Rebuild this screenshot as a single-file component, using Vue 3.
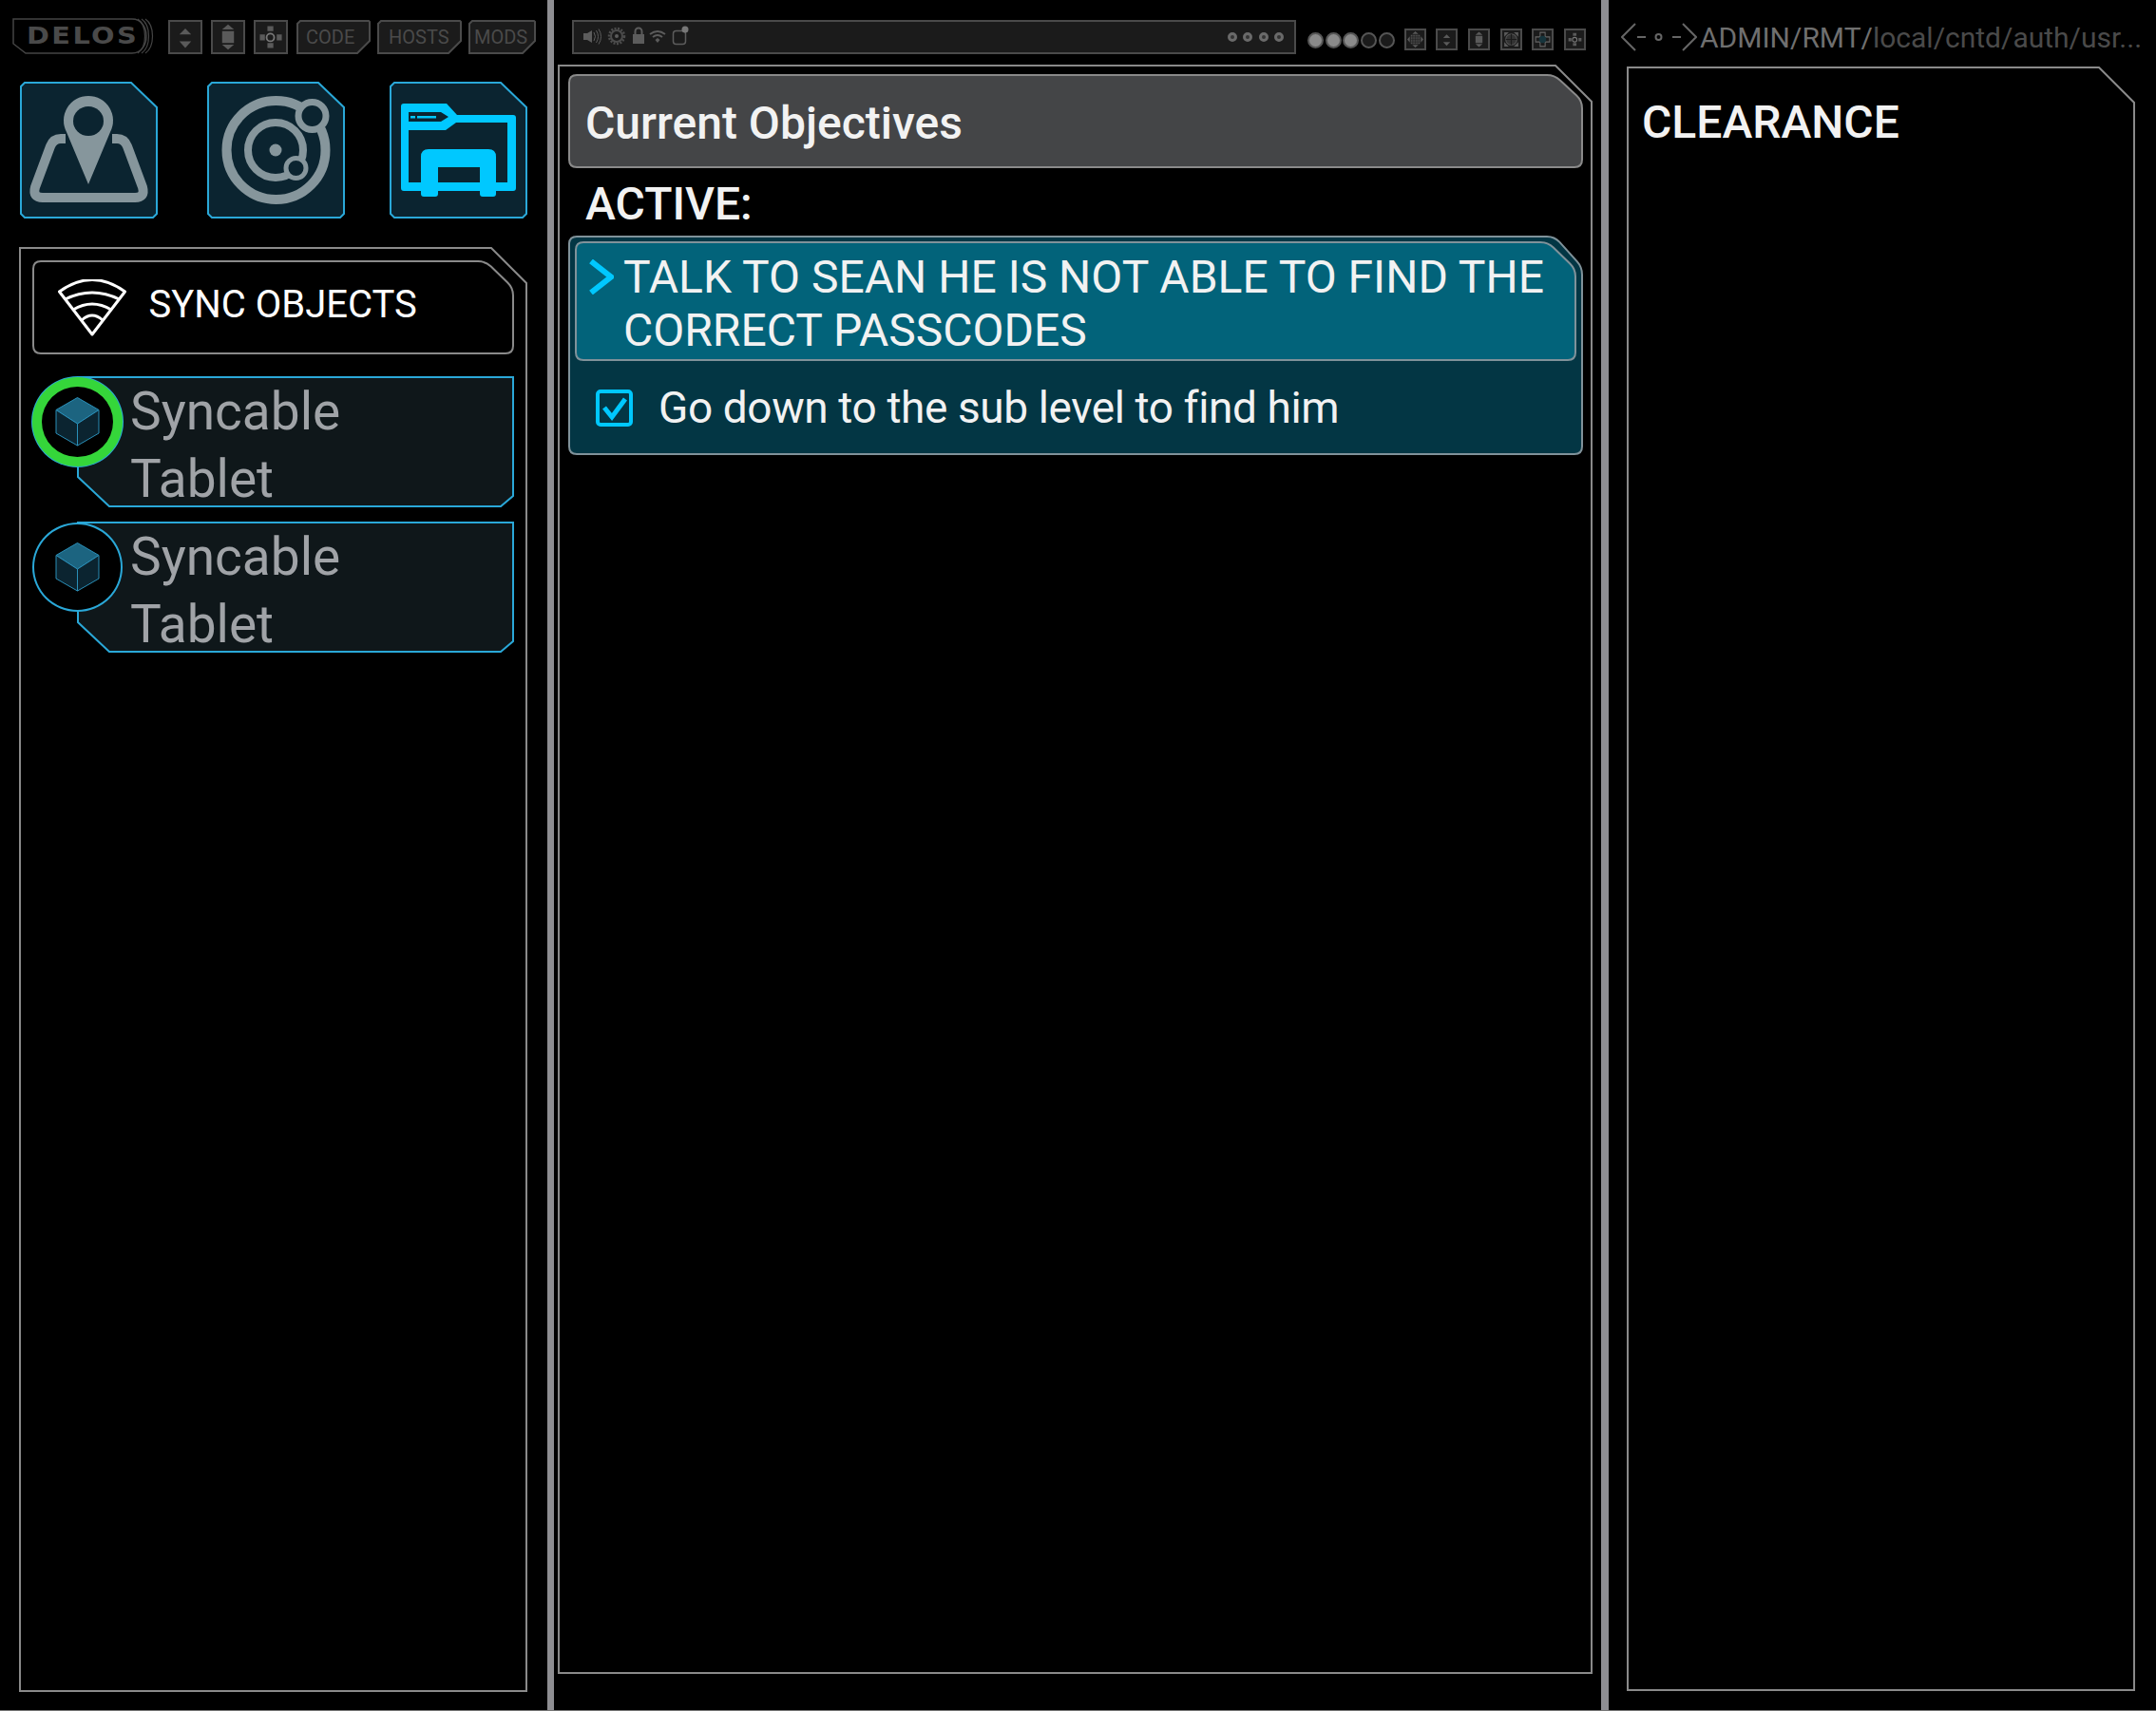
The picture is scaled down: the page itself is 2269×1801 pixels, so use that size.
<script setup>
// Arma el contorno con esquinas cortadas (en px de la caja)
function shape(w, h, { tl = [0, 0], tr = [0, 0], br = [0, 0], bl = [0, 0], r = 0 } = {}) {
  const i = 1
  const pts = [
    [i + tl[0], i], [w - i - tr[0], i], [w - i, i + tr[1]],
    [w - i, h - i - br[1]], [w - i - br[0], h - i], [i + bl[0], h - i],
    [i, h - i - bl[1]], [i, i + tl[1]]
  ].filter((p, k, a) => {
    const n = a[(k + 1) % a.length]
    return p[0] !== n[0] || p[1] !== n[1]
  })
  if (!r) return 'M' + pts.map((p) => p.join(' ')).join('L') + 'Z'
  let d = ''
  pts.forEach((p, k) => {
    const a = pts[(k + pts.length - 1) % pts.length]
    const b = pts[(k + 1) % pts.length]
    const toward = (q) => {
      const len = Math.hypot(q[0] - p[0], q[1] - p[1])
      const t = Math.min(r, len / 2) / len
      return [p[0] + (q[0] - p[0]) * t, p[1] + (q[1] - p[1]) * t]
    }
    const s = toward(a)
    const e = toward(b)
    d += `${k ? 'L' : 'M'}${s[0]} ${s[1]}Q${p[0]} ${p[1]} ${e[0]} ${e[1]}`
  })
  return d + 'Z'
}

const navCut = { tr: [27, 26], tl: [4, 4], bl: [4, 4], br: [4, 4] }
const tabs = [
  { label: 'CODE', w: 78, pad: 10 },
  { label: 'HOSTS', w: 89, pad: 12 },
  { label: 'MODS', w: 71, pad: 6 }
]
const rows = [{ id: 1, synced: true }, { id: 2, synced: false }]
const dots = [true, true, true, false, false]
const rightIcons = ['i-grid', 'i-ud', 'i-body', 'i-ball', 'i-node', 'i-cross']
</script>

<template>
  <div class="page">
    <!-- simbolos de la barra -->
    <svg class="defs" width="0" height="0">
      <symbol id="i-ud" viewBox="0 0 36 36">
        <path d="M18 8l7 7H11zM11 23h14l-7 8z" />
      </symbol>
      <symbol id="i-body" viewBox="0 0 36 36">
        <path d="M18 3l7 6H11zM11 11h14v14H11zM11 27h14l-7 6z" />
      </symbol>
      <symbol id="i-cross" viewBox="0 0 36 36">
        <path d="M14 5h7v6h-7zM14 25h7v6h-7zM5 15h6v7H5zM25 15h6v7h-6z" />
        <circle cx="17.5" cy="18.5" r="4.5" fill="none" stroke="#777" stroke-width="2" />
      </symbol>
      <symbol id="i-grid" viewBox="0 0 36 36">
        <path d="M18 2l6 5H12zM12 29h12l-6 5zM2 18l5-6v12zM34 18l-5-6v12z" />
        <path d="M9 9h18v18H9z" />
        <path d="M12 9v18M15 9v18M18 9v18M21 9v18M24 9v18M9 12h18M9 15h18M9 18h18M9 21h18M9 24h18" stroke="#1b1b1b" stroke-width="1" />
      </symbol>
      <symbol id="i-ball" viewBox="0 0 36 36">
        <path d="M4 4h9L4 13zM32 4h-9l9 9zM4 32h9l-9-9zM32 32h-9l9-9z" />
        <circle cx="18" cy="18" r="11" fill="#333" stroke="#555" stroke-width="2" />
        <path d="M18 7v22M7 18h22" stroke="#1b1b1b" stroke-width="2" />
      </symbol>
      <symbol id="i-node" viewBox="0 0 36 36">
        <path d="M13 4h10v9h9v10h-9v9H13v-9H4V13h9z" fill="none" stroke="#666" stroke-width="2" />
        <circle cx="18" cy="18" r="7" fill="#16343c" />
      </symbol>
    </svg>

    <!-- columna izquierda -->
    <section class="col col-left">
      <div class="topbar">
        <div class="delos">
          <svg class="fill" width="146" height="38">
            <path d="M1 1H126C146 1 146 37 126 37H14L1 27Z" fill="none" stroke="#444" stroke-width="1.5" />
            <path d="M132 1C142 8 142 30 132 37M136 1C146 8 146 30 136 37M140 1C150 8 150 30 140 37" fill="none" stroke="#444" stroke-width="1.2" />
          </svg>
          <span>DELOS</span>
        </div>
        <svg v-for="id in ['i-ud', 'i-body', 'i-cross']" :key="id" class="sq" width="36" height="36"><use :href="'#' + id" /></svg>
        <div v-for="t in tabs" :key="t.label" class="tab" :style="{ width: t.w + 'px', paddingLeft: t.pad + 'px' }">
          <svg class="fill" :width="t.w" height="36">
            <path :d="shape(t.w, 36, { tl: [3, 3], br: [13, 13], tr: [1, 1] })" fill="#1b1b1b" stroke="#4a4a4a" stroke-width="2" />
          </svg>
          <span>{{ t.label }}</span>
        </div>
      </div>

      <div class="nav">
        <button class="nav-btn">
          <svg width="145" height="144">
            <path :d="shape(145, 144, navCut)" fill="#0b2430" stroke="#2aa8d8" stroke-width="2" />
            <path d="M48 60h-5q-8 0-11 8L16 111q-3 11 8 11H121q11 0 8-11L113 68q-3-8-11-8h-5" fill="none" stroke="#86969c" stroke-width="10" />
            <path d="M72 108L49 53A26 26 0 1 1 95 53Z" fill="#86969c" />
            <ellipse cx="72" cy="41.5" rx="16" ry="15.5" fill="#0b2430" />
          </svg>
        </button>
        <button class="nav-btn">
          <svg width="145" height="144">
            <path :d="shape(145, 144, navCut)" fill="#0b2430" stroke="#2aa8d8" stroke-width="2" />
            <g fill="#0b2430" stroke="#86969c">
              <circle cx="72.5" cy="72" r="52" stroke-width="10" />
              <circle cx="72" cy="72" r="29" stroke-width="8" />
              <circle cx="110.5" cy="36" r="14.5" stroke-width="7" />
              <circle cx="93.5" cy="91" r="10.5" stroke-width="5" />
            </g>
            <circle cx="72" cy="72" r="6.5" fill="#86969c" />
          </svg>
        </button>
        <button class="nav-btn">
          <svg width="145" height="144">
            <path :d="shape(145, 144, navCut)" fill="#0b2430" stroke="#2aa8d8" stroke-width="2" />
            <path fill="#00c8ff" fill-rule="evenodd" d="M15 23H60L71 35H130q3 0 3 3V112q0 3-3 3H112v3q0 3-3 3H98q-3 0-3-3v-3H51v3q0 3-3 3H36q-3 0-3-3v-3H15q-3 0-3-3V26q0-3 3-3ZM20 32V42H54L62 37 54 32ZM20 51V106H33V79q0-8 8-8H104q8 0 8 8V106H124V43H70L59 51ZM51 90V106H95V90Z" />
            <path d="M22 36h5v2.500h-5zM29 36h20v2.500H29z" fill="#00c8ff" />
          </svg>
        </button>
      </div>

      <div class="panel panel-left">
        <svg class="fill" width="535" height="1521">
          <path :d="shape(535, 1521, { tr: [37, 37] })" fill="none" stroke="#8a8a8a" stroke-width="2" />
        </svg>
        <div class="sync">
          <svg class="fill" width="507" height="99">
            <path :d="shape(507, 99, { tr: [29, 28], r: 8 })" fill="none" stroke="#8a8a8a" stroke-width="2" />
          </svg>
          <svg class="wifi" width="72" height="60" viewBox="0 0 72 60">
            <path d="M1.500 13Q36-12 70.500 13L36 58Z" fill="none" stroke="#fff" stroke-width="3" stroke-linejoin="round" />
            <path d="M7.500 21Q36 7 64.500 21M16 32Q36 20 56 32M25 43Q36 33 47 43" fill="none" stroke="#fff" stroke-width="3" />
          </svg>
          <span>SYNC OBJECTS</span>
        </div>
        <div v-for="row in rows" :key="row.id" class="row">
          <svg class="row-bg" width="460" height="138">
            <path :d="shape(460, 138, { bl: [33, 31], br: [13, 11] })" fill="#0f171a" stroke="#2aa8d8" stroke-width="2" />
          </svg>
          <div class="disc" :class="{ synced: row.synced }">
            <svg width="47" height="52" viewBox="0 0 47 52">
              <path d="M23.500.500L46 13.500 23.500 28 1 13.500Z" fill="#1c6480" stroke="#2a8fb8" />
              <path d="M1 13.500L23.500 28V51L1 38ZM46 13.500L23.500 28V51L46 38Z" fill="#0b2430" stroke="#2a8fb8" />
            </svg>
          </div>
          <div class="row-label">Syncable Tablet</div>
        </div>
      </div>
    </section>

    <div class="divider"></div>

    <!-- columna central -->
    <section class="col col-mid">
      <div class="topbar-mid">
        <div class="status">
          <svg width="125" height="34" viewBox="0 0 125 34" fill="#5c5c5c">
            <path d="M8 13h4l5-3v13l-5-3H8z" />
            <path d="M19 12q3 4.500 0 9M21.500 10q4 6.500 0 13M24 8.500q5 8 0 16" fill="none" stroke="#5c5c5c" />
            <circle cx="43" cy="16" r="6" fill="none" stroke="#4c4c4c" stroke-width="2" />
            <circle cx="43" cy="16" r="8" fill="none" stroke="#4c4c4c" stroke-width="2.500" stroke-dasharray="2 1.500" />
            <circle cx="43" cy="16" r="2" />
            <path d="M60 14h12v10H60z" />
            <path d="M62.500 14v-3a3.500 3.500 0 0 1 7 0v3" fill="none" stroke="#5c5c5c" stroke-width="2" />
            <path d="M78 14q8-6 16 0M81 17q5-4 10 0" fill="none" stroke="#5c5c5c" stroke-width="2" />
            <path d="M83.500 20l2.500-2 2.500 2-2.500 3z" />
            <rect x="102.500" y="10.500" width="13" height="14" rx="3" fill="none" stroke="#5c5c5c" stroke-width="1.500" />
            <circle cx="115" cy="9" r="3.500" fill="#777" />
          </svg>
          <div class="leds"><i v-for="n in 4" :key="n"></i></div>
        </div>
        <div class="dots"><i v-for="(on, k) in dots" :key="k" :class="{ on }"></i></div>
        <div class="mini">
          <svg v-for="id in rightIcons" :key="id" class="sq sq-small" width="23" height="23"><use :href="'#' + id" /></svg>
        </div>
      </div>

      <div class="panel panel-mid">
        <svg class="fill" width="1089" height="1694">
          <path :d="shape(1089, 1694, { tr: [38, 38] })" fill="none" stroke="#8a8a8a" stroke-width="2" />
        </svg>
        <div class="head">
          <svg class="fill" width="1068" height="99">
            <path :d="shape(1068, 99, { tr: [29, 27], r: 8 })" fill="#444547" stroke="#8a8a8a" stroke-width="2" />
          </svg>
          <span>Current Objectives</span>
        </div>
        <div class="active-title">ACTIVE:</div>
        <div class="objective">
          <svg class="fill" width="1068" height="231">
            <path :d="shape(1068, 231, { tr: [29, 32], r: 8 })" fill="#033644" stroke="#80929a" stroke-width="2" />
          </svg>
          <div class="obj-main">
            <svg class="fill" width="1054" height="126">
              <path :d="shape(1054, 126, { tr: [29, 28], r: 8 })" fill="#02637a" stroke="#80929a" stroke-width="2" />
            </svg>
            <svg class="chevron" width="27" height="37" viewBox="0 0 27 37">
              <path d="M3 2L24 18.500 3 35" fill="none" stroke="#00c8ff" stroke-width="6" />
            </svg>
            <div class="obj-text">TALK TO SEAN HE IS NOT ABLE TO FIND THE CORRECT PASSCODES</div>
          </div>
          <div class="obj-sub">
            <svg width="39" height="39" viewBox="0 0 39 39">
              <rect x="2" y="2" width="35" height="35" rx="3" fill="none" stroke="#00c8ff" stroke-width="4" />
              <path d="M9 19L17 29 31 10" fill="none" stroke="#00c8ff" stroke-width="5" />
            </svg>
            <span>Go down to the sub level to find him</span>
          </div>
        </div>
      </div>
    </section>

    <div class="divider divider-2"></div>

    <!-- columna derecha -->
    <section class="col col-right">
      <div class="url">
        <svg width="80" height="30" viewBox="0 0 80 30">
          <path d="M15 1L1 15 15 29M17 15h9M54 15h9M65 1L79 15 65 29" fill="none" stroke="#666" stroke-width="2" />
          <circle cx="39.500" cy="15" r="3" fill="none" stroke="#666" stroke-width="2" />
        </svg>
        <span class="url-text"><b>ADMIN/RMT/</b>local/cntd/auth/usr...</span>
      </div>
      <div class="panel panel-right">
        <svg class="fill" width="535" height="1710">
          <path :d="shape(535, 1710, { tr: [37, 37] })" fill="none" stroke="#8a8a8a" stroke-width="2" />
        </svg>
        <div class="clearance">CLEARANCE</div>
      </div>
    </section>
  </div>
</template>

<style>
html, body {
  background: #000;
}
</style>

<style scoped>
.page {
  width: 2269px;
  height: 1801px;
  box-sizing: border-box;
  display: flex;
  background: #000;
  border-bottom: 1px solid #777;
  font-family: Roboto, "Liberation Sans", sans-serif;
  overflow: hidden;
}

.defs {
  position: absolute;
}

.fill {
  position: absolute;
  left: 0;
  top: 0;
  overflow: visible;
}

.col {
  flex: none;
}

.col-left {
  width: 576px;
}

.col-mid {
  width: 1102px;
}

.col-right {
  flex: 1;
}

.divider {
  flex: none;
  width: 7px;
  background: #8e8e92;
}

.divider-2 {
  width: 8px;
}

.panel {
  position: relative;
}

/* barra superior izquierda */
.topbar {
  display: flex;
  align-items: flex-end;
  height: 38px;
  margin-top: 19px;
  padding-left: 13px;
}

.delos {
  position: relative;
  width: 146px;
  height: 38px;
  margin-right: 18px;
  color: #4a4a4a;
  font-family: "DejaVu Sans", sans-serif;
  font-weight: 700;
  font-size: 24px;
  letter-spacing: 2px;
  line-height: 38px;
}

.delos span {
  position: relative;
  display: block;
  margin-left: 15px;
  transform: scaleX(1.2);
  transform-origin: left center;
}

.sq {
  flex: none;
  box-sizing: border-box;
  background: #1b1b1b;
  border: 2px solid #4a4a4a;
  fill: #5a5a5a;
  margin-right: 9px;
}

.tab {
  position: relative;
  box-sizing: border-box;
  flex: none;
  height: 36px;
  margin-right: 7px;
  color: #4a4a4a;
  font-size: 20px;
  line-height: 36px;
}

.tab span {
  position: relative;
}

/* botones grandes */
.nav {
  display: flex;
  margin-top: 29px;
  padding-left: 21px;
}

.nav-btn {
  flex: none;
  width: 145px;
  height: 144px;
  padding: 0;
  border: 0;
  background: none;
}

.nav-btn + .nav-btn {
  margin-left: 52px;
}

.nav-btn:last-child {
  margin-left: 47px;
}

.panel-left {
  width: 535px;
  height: 1521px;
  margin: 30px 0 0 20px;
  padding: 14px;
  box-sizing: border-box;
}

.sync {
  position: relative;
  display: flex;
  align-items: center;
  height: 99px;
  padding-left: 27px;
  color: #fff;
  font-size: 40px;
}

.wifi {
  position: relative;
  margin-right: 23.500px;
}

.sync span {
  position: relative;
  top: -3px;
}

.row {
  position: relative;
  display: flex;
  width: 507px;
  height: 138px;
  margin-top: 23px;
}

.row + .row {
  margin-top: 15px;
}

.row-bg {
  position: absolute;
  left: 47px;
  top: 0;
}

.disc {
  position: relative;
  flex: none;
  display: flex;
  align-items: center;
  justify-content: center;
  box-sizing: border-box;
  width: 95px;
  height: 94px;
  margin-top: 1px;
  border-radius: 50%;
  background: #000;
  border: 2px solid #2aa8d8;
}

.disc.synced {
  border: 10px solid #35d63a;
  box-shadow: inset 0 0 0 1px #000, 0 0 0 1px #2aa8d8;
}

.row-label {
  position: relative;
  width: 300px;
  margin: 2px 0 0 8px;
  color: #a0a3a7;
  font-size: 55px;
  line-height: 71px;
}

/* barra superior central */
.topbar-mid {
  display: flex;
  align-items: center;
  height: 36px;
  margin: 21px 0 0 19px;
}

.status {
  flex: none;
  display: flex;
  align-items: center;
  justify-content: space-between;
  box-sizing: border-box;
  width: 762px;
  height: 36px;
  padding: 0 11px 0 2px;
  background: #1b1b1b;
  border: 2px solid #4a4a4a;
}

.leds {
  display: flex;
  gap: 6.400px;
}

.leds i {
  width: 10px;
  height: 10px;
  box-sizing: border-box;
  border-radius: 50%;
  border: 3px solid #6a6a6a;
  background: #333;
}

.dots {
  display: flex;
  gap: 1.700px;
  margin: 6px 0 0 12px;
}

.dots i {
  width: 17px;
  height: 17px;
  box-sizing: border-box;
  border-radius: 50%;
  border: 2px solid #555;
  background: #1b1b1b;
}

.dots i.on {
  background: #8a8a8a;
}

.mini {
  display: flex;
  gap: 10.600px;
  margin: 5px 0 0 10px;
}

.sq-small {
  margin: 0;
}

.panel-mid {
  width: 1089px;
  height: 1694px;
  margin: 11px 0 0 4px;
  padding: 10px 10px 0 11px;
  box-sizing: border-box;
}

.head {
  position: relative;
  display: flex;
  align-items: center;
  height: 99px;
  padding: 3px 0 0 18px;
  box-sizing: border-box;
  color: #f2f2f2;
  font-size: 48px;
  font-weight: 500;
}

.head span {
  position: relative;
}

.active-title {
  height: 71px;
  padding: 4px 0 0 18px;
  box-sizing: border-box;
  color: #f2f2f2;
  font-size: 48px;
  font-weight: 500;
  line-height: 68px;
}

.objective {
  position: relative;
  height: 231px;
  padding: 6px 7px 0;
  box-sizing: border-box;
}

.obj-main {
  position: relative;
  display: flex;
  height: 126px;
  padding: 10px 0 0 14px;
  box-sizing: border-box;
}

.chevron {
  position: relative;
  flex: none;
  margin: 9px 10px 0 0;
}

.obj-text {
  position: relative;
  width: 985px;
  color: #f2f2f2;
  font-size: 48px;
  line-height: 56px;
}

.obj-sub {
  position: relative;
  display: flex;
  align-items: center;
  gap: 27px;
  height: 98px;
  padding-left: 22px;
  color: #f2f2f2;
  font-size: 46px;
  letter-spacing: -0.4px;
}

/* columna derecha */
.url {
  display: flex;
  align-items: center;
  height: 30px;
  margin-top: 24px;
  padding-left: 13px;
  white-space: nowrap;
}

.url-text {
  margin-left: 3px;
  color: #4a4a4a;
  font-size: 30px;
}

.url-text b {
  color: #6f6f6f;
  font-weight: 400;
}

.panel-right {
  width: 535px;
  height: 1711px;
  margin: 16px 0 0 19px;
  padding: 0 0 0 16px;
  box-sizing: border-box;
}

.clearance {
  position: relative;
  padding-top: 30px;
  color: #f2f2f2;
  font-size: 48px;
  font-weight: 500;
  line-height: 58px;
}
</style>
